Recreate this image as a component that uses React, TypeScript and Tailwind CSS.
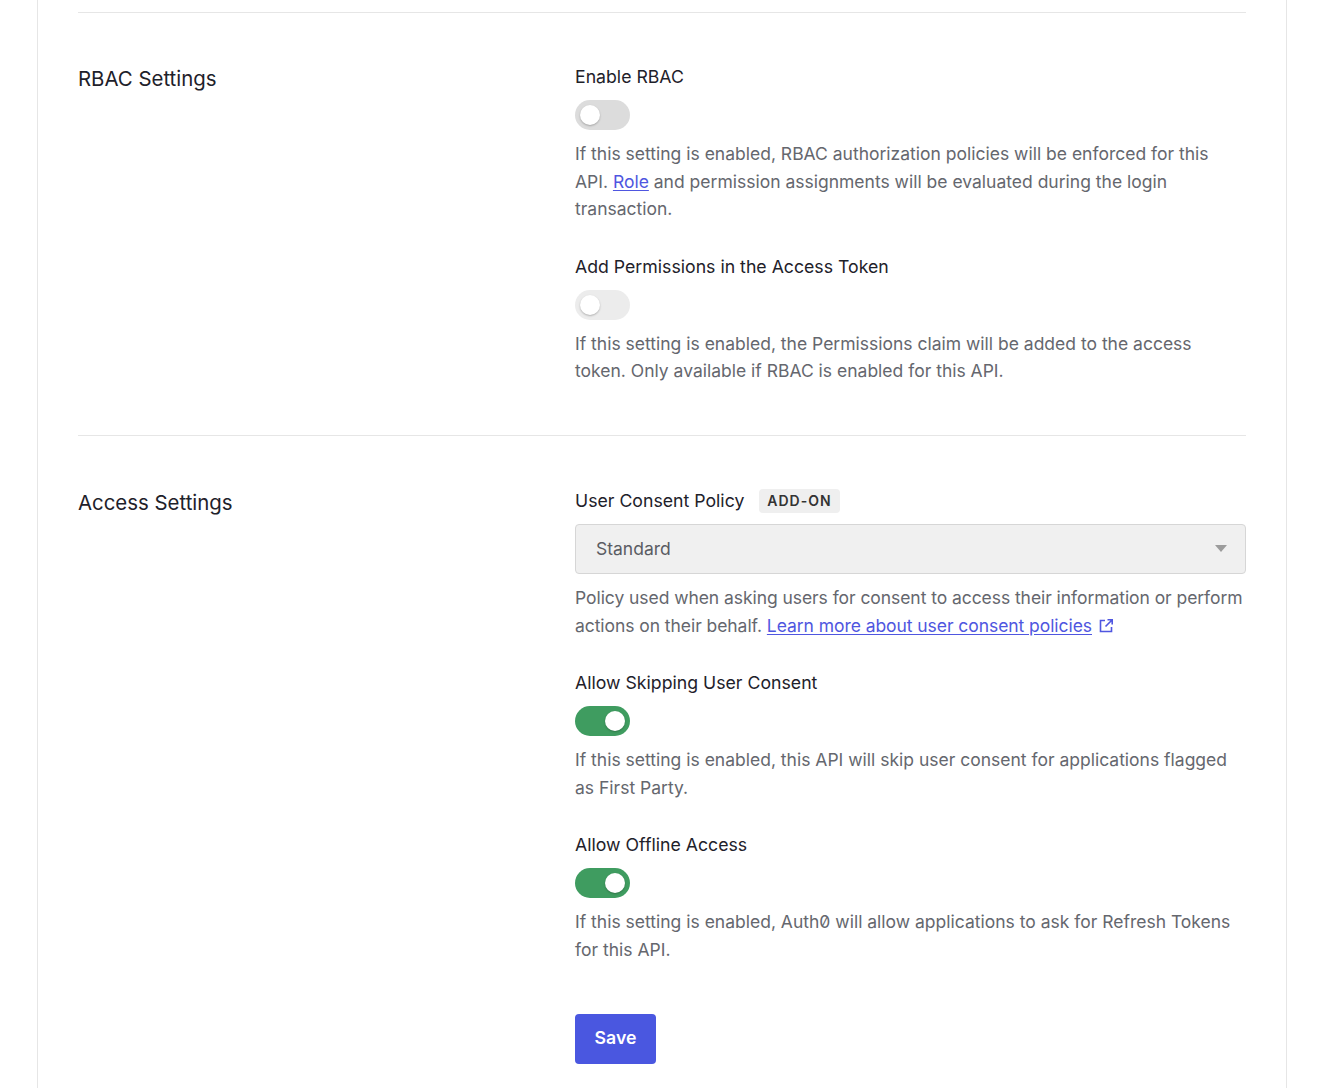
import React from "react";

function Toggle({ on, disabled }: { on?: boolean; disabled?: boolean }) {
  const track = on ? "bg-[#3f9c60]" : disabled ? "bg-[#ececec]" : "bg-[#dcdcdc]";
  return (
    <div className={`relative h-[30px] w-[55px] rounded-full ${track}`}>
      <div
        className={`absolute top-[5px] h-[20px] w-[20px] rounded-full bg-white shadow-[0_1px_2px_rgba(0,0,0,0.25)] ${
          on ? "left-[30px]" : "left-[5px]"
        }`}
      />
    </div>
  );
}

function Field({
  label,
  children,
  desc,
  className = "",
  descClass = "",
}: {
  label: React.ReactNode;
  children: React.ReactNode;
  desc: React.ReactNode;
  className?: string;
  descClass?: string;
}) {
  return (
    <div className={className}>
      <div className="flex items-center text-[17.7px] leading-[24px] text-[#1e212a]">{label}</div>
      <div className="mt-[11px]">{children}</div>
      <p className={`mt-[10px] text-[17.5px] leading-[27.6px] text-[#65676e] ${descClass}`}>{desc}</p>
    </div>
  );
}

function ExtIcon() {
  return (
    <svg width="16" height="16" viewBox="0 0 16 16" fill="none" className="ml-[6px] inline-block align-[-2px]">
      <path d="M7 2.5H2.5v11h11V9" stroke="#4f56e0" strokeWidth="1.6" />
      <path d="M9.5 1.8h4.7v4.7M14 2 7.5 8.5" stroke="#4f56e0" strokeWidth="1.6" />
    </svg>
  );
}

export default function App() {
  return (
    <div className="min-h-[1088px] bg-white" style={{ fontFamily: "Inter, 'Noto Sans', sans-serif" }}>
      <div className="ml-[37px] min-h-[1088px] w-[1250px] border-x border-[#e6e6e6] px-[40px] pt-[12px]">
        {/* RBAC */}
        <section className="grid grid-cols-[497px_1fr] border-t border-[#e6e6e6] pb-[50px] pt-[52px]">
          <h2 className="text-[20.4px] leading-[28px] text-[#1e212a]">RBAC Settings</h2>
          <div>
            <Field
              label="Enable RBAC"
              desc={
                <>
                  If this setting is enabled, RBAC authorization policies will be enforced for this API.{" "}
                  <a className="text-[#4f56e0] underline underline-offset-2">Role</a> and permission assignments will be
                  evaluated during the login transaction.
                </>
              }
            >
              <Toggle />
            </Field>
            <Field
              className="mt-[32px]"
              label="Add Permissions in the Access Token"
              desc="If this setting is enabled, the Permissions claim will be added to the access token. Only available if RBAC is enabled for this API."
            >
              <Toggle disabled />
            </Field>
          </div>
        </section>

        {/* Access */}
        <section className="grid grid-cols-[497px_1fr] border-t border-[#e6e6e6] pb-[24px] pt-[53px]">
          <h2 className="text-[20.4px] leading-[28px] text-[#1e212a]">Access Settings</h2>
          <div>
            <Field
              descClass="tracking-[-0.06px]"
              label={
                <>
                  <span>User Consent Policy</span>
                  <span className="ml-[15px] rounded-[4px] bg-[#efefef] px-[8px] py-[2px] text-[14px] font-semibold leading-[20px] tracking-[0.07em] text-[#333]">
                    ADD-ON
                  </span>
                </>
              }
              desc={
                <>
                  Policy used when asking users for consent to access their information or perform actions on their
                  behalf.{" "}
                  <a className="text-[#4f56e0] underline underline-offset-2">Learn more about user consent policies</a>
                  <ExtIcon />
                </>
              }
            >
              <div className="flex h-[50px] items-center justify-between rounded-[4px] border border-[#d6d6d6] bg-[#f0f0f0] pl-[20px] pr-[18px] text-[17.5px] text-[#5a5c63]">
                <span>Standard</span>
                <svg width="12" height="7" viewBox="0 0 12 7">
                  <path d="M0 0h12L6 7z" fill="#9c9c9c" />
                </svg>
              </div>
            </Field>
            <Field
              className="mt-[32px]"
              label="Allow Skipping User Consent"
              desc="If this setting is enabled, this API will skip user consent for applications flagged as First Party."
            >
              <Toggle on />
            </Field>
            <Field
              className="mt-[32px]"
              label="Allow Offline Access"
              desc={
                <>
                  If this setting is enabled, Auth<span className="slashed-zero">0</span> will allow applications to ask
                  for Refresh Tokens for this API.
                </>
              }
            >
              <Toggle on />
            </Field>
            <button className="mt-[50px] h-[50px] w-[81px] rounded-[4px] bg-[#4a57e0] text-[17.7px] font-semibold text-white">
              Save
            </button>
          </div>
        </section>
      </div>
    </div>
  );
}
